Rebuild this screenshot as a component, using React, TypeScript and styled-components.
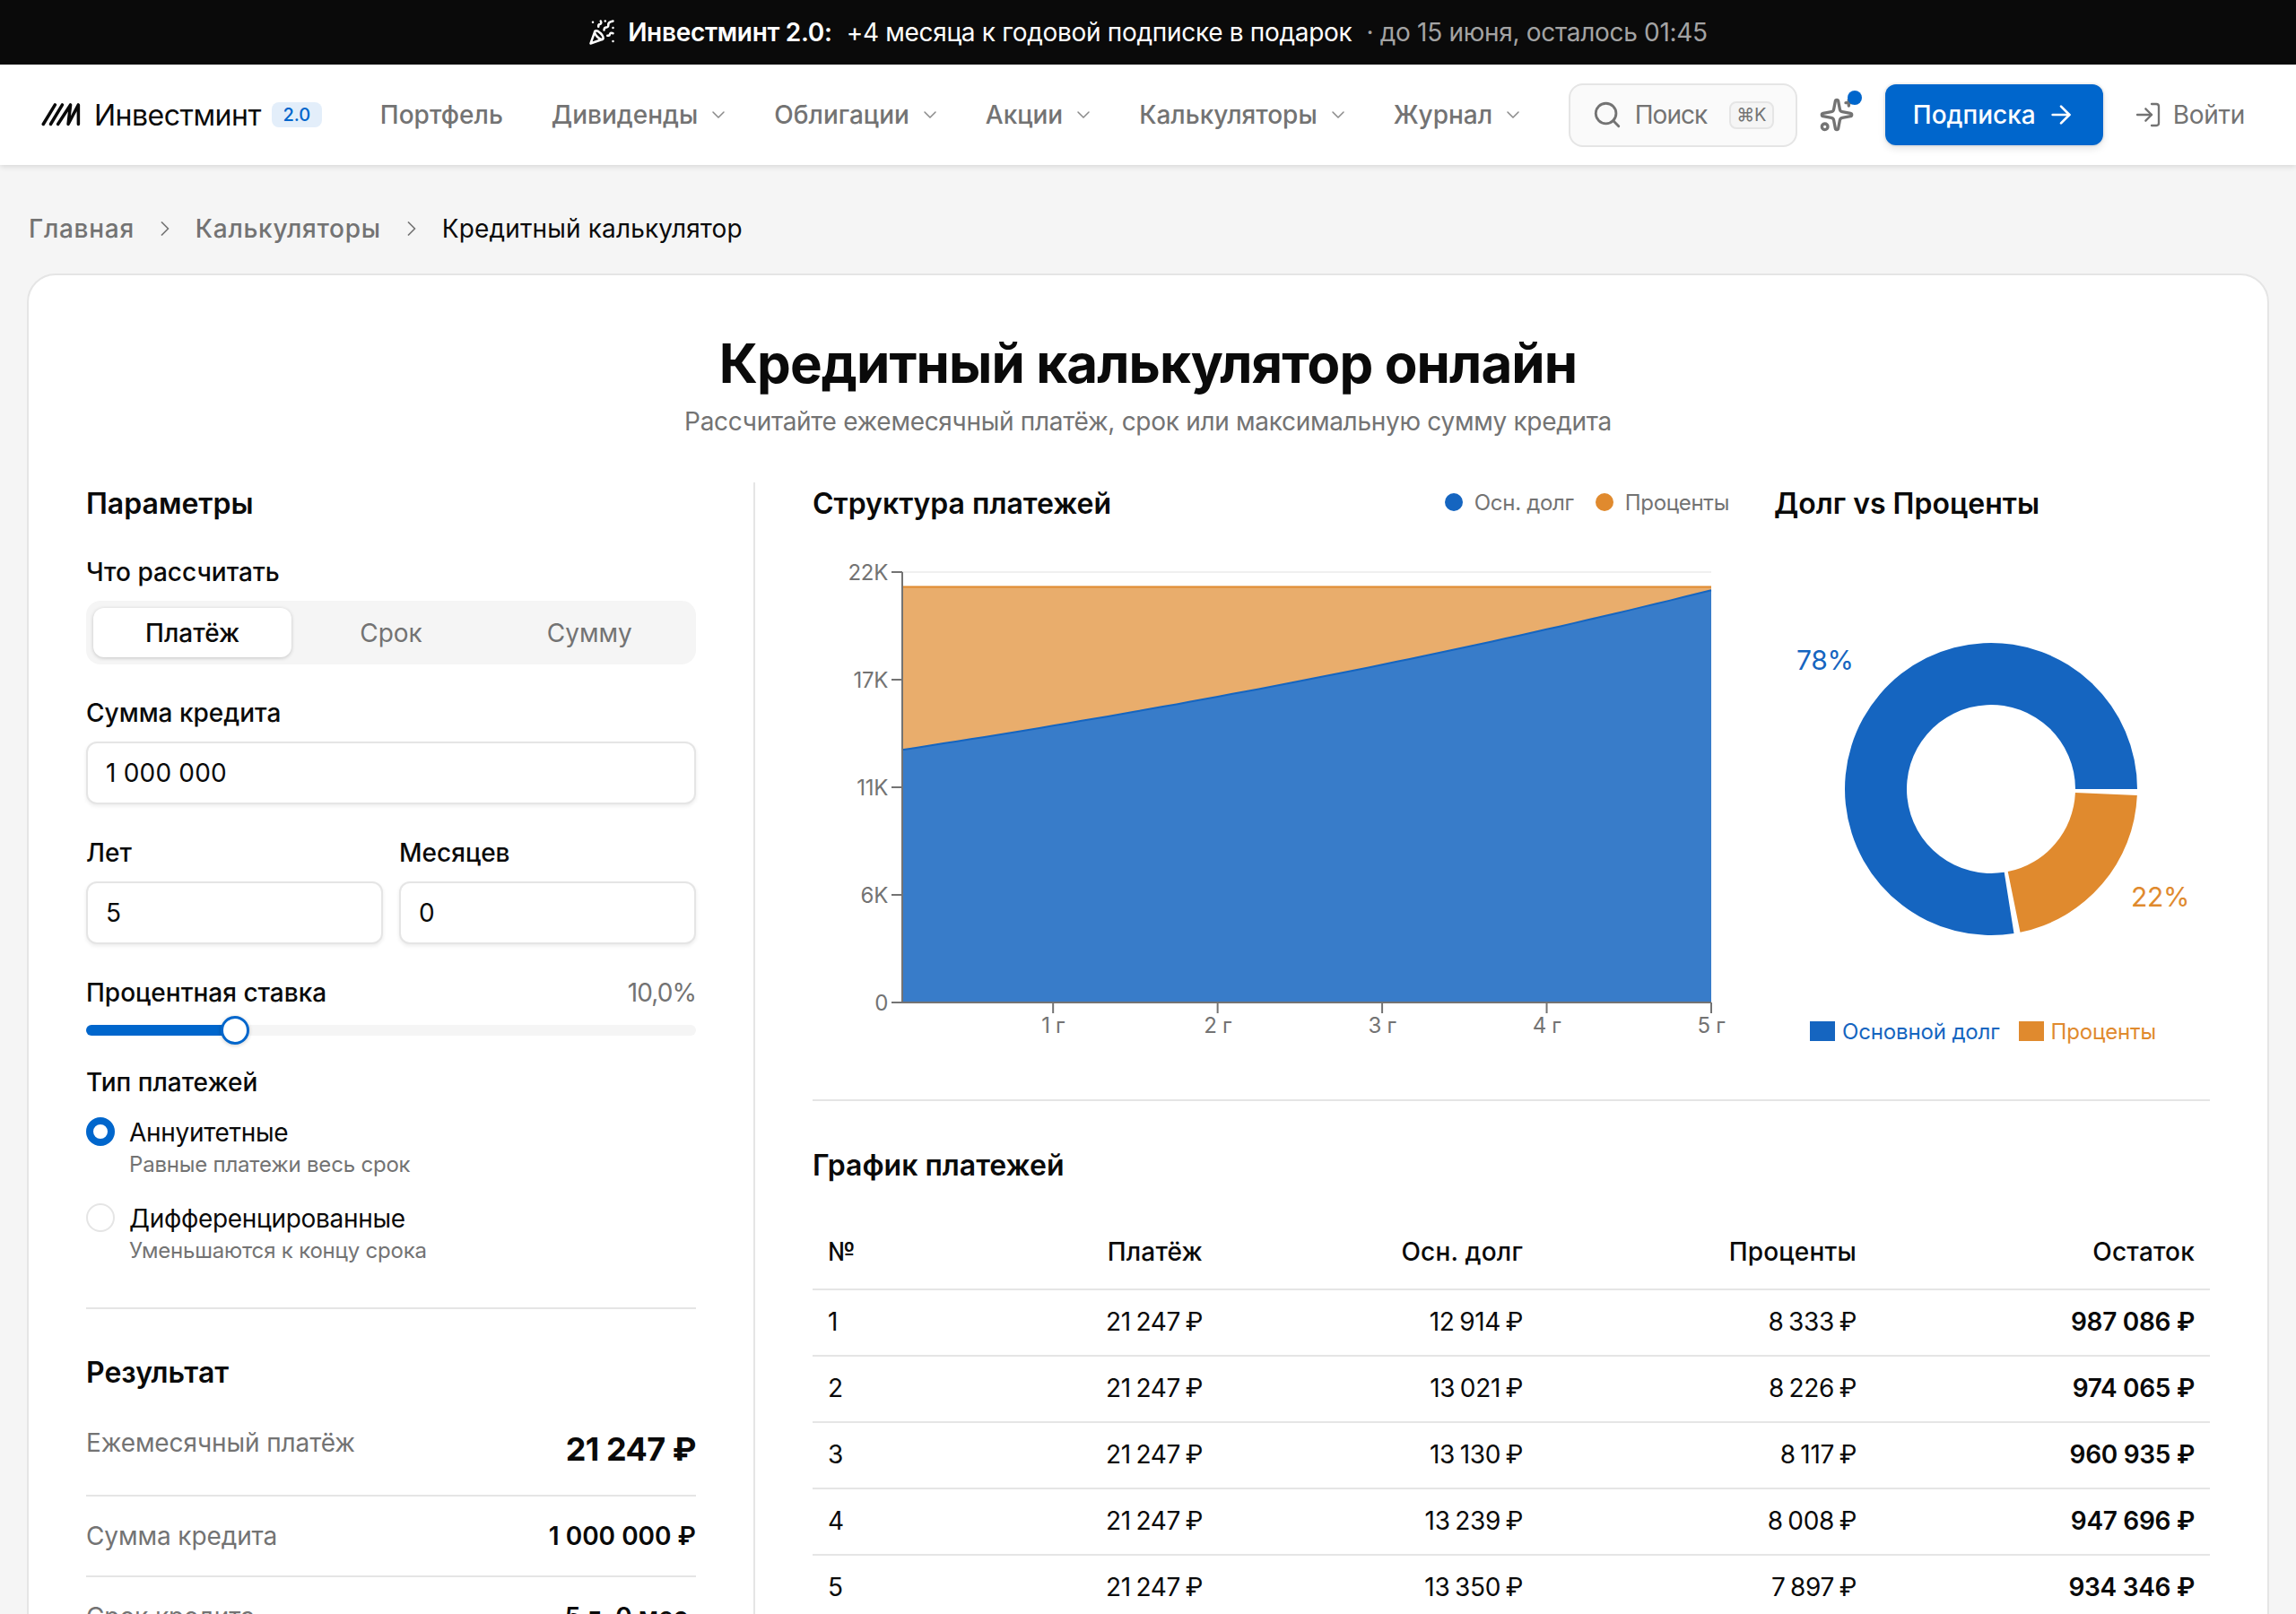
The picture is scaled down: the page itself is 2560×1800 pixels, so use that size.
import styled, { createGlobalStyle } from "styled-components";
import {
  ArrowRight,
  ChevronDown,
  ChevronRight,
  LogIn,
  PartyPopper,
  Search,
  Sparkles,
} from "lucide-react";

const BLUE = "#1565c0";
const ORANGE = "#e08a2e";

const GlobalStyle = createGlobalStyle`
  html, body {
    margin: 0;
    height: 1800px;
    overflow: hidden;
    background: #f5f5f5;
    color: #0a0a0a;
    font-family: Inter, "Liberation Sans", sans-serif;
    letter-spacing: -0.3px;
  }
  * { box-sizing: border-box; }
`;

const navItems = [
  { label: "Портфель", menu: false },
  { label: "Дивиденды", menu: true },
  { label: "Облигации", menu: true },
  { label: "Акции", menu: true },
  { label: "Калькуляторы", menu: true },
  { label: "Журнал", menu: true },
];

const schedule = [
  ["1", "21 247 ₽", "12 914 ₽", "8 333 ₽", "987 086 ₽"],
  ["2", "21 247 ₽", "13 021 ₽", "8 226 ₽", "974 065 ₽"],
  ["3", "21 247 ₽", "13 130 ₽", "8 117 ₽", "960 935 ₽"],
  ["4", "21 247 ₽", "13 239 ₽", "8 008 ₽", "947 696 ₽"],
  ["5", "21 247 ₽", "13 350 ₽", "7 897 ₽", "934 346 ₽"],
];

// chart geometry, in svg units
const PLOT = { left: 100, right: 1002, top: 24, bottom: 504 };
const yOf = (v: number) => PLOT.bottom - (v * 480) / 22000;
const xOf = (month: number) => PLOT.left + ((month - 1) / 59) * (PLOT.right - PLOT.left);

const curve = Array.from({ length: 60 }, (_, i) => {
  const principal = 12914 * Math.pow(1 + 0.1 / 12, i);
  return `${xOf(i + 1).toFixed(1)} ${yOf(principal).toFixed(1)}`;
});
const curveLine = "M" + curve.join(" L");
const blueArea = `${curveLine} L${PLOT.right} ${PLOT.bottom} L${PLOT.left} ${PLOT.bottom} Z`;
const orangeArea = `${curveLine} L${PLOT.right} ${yOf(21247)} L${PLOT.left} ${yOf(21247)} Z`;

const yTicks = [
  { label: "22K", y: 24 },
  { label: "17K", y: 144 },
  { label: "11K", y: 264 },
  { label: "6K", y: 384 },
  { label: "0", y: 504 },
];
const xTicks = ["1 г", "2 г", "3 г", "4 г", "5 г"].map((label, i) => ({
  label,
  x: xOf(i === 4 ? 60 : (i + 1) * 12),
}));

const polar = (r: number, deg: number) => {
  const a = (deg * Math.PI) / 180;
  return `${(242 + r * Math.cos(a)).toFixed(2)} ${(266 + r * Math.sin(a)).toFixed(2)}`;
};
const slice = (from: number, to: number) => {
  const large = to - from > 180 ? 1 : 0;
  return `M${polar(163, from)} A163 163 0 ${large} 1 ${polar(163, to)} L${polar(94, to)} A94 94 0 ${large} 0 ${polar(94, from)} Z`;
};

export default function App() {
  return (
    <>
      <GlobalStyle />
      <Promo>
        <PartyPopper size={30} strokeWidth={2} />
        <PromoStrong>Инвестминт 2.0:</PromoStrong>
        <span>+4 месяца к годовой подписке в подарок</span>
        <PromoMuted>· до 15 июня, осталось 01:45</PromoMuted>
      </Promo>
      <Nav>
        <Logo>
          <svg width="45" height="28" viewBox="0 0 46 28" fill="none" stroke="#0a0a0a" strokeWidth="3.6" strokeLinecap="round" strokeLinejoin="round">
            <path d="M2.3 24.7 L15.7 2.7" />
            <path d="M10.7 24.7 L24 2.7" />
            <path d="M19 24.7 L33.3 2.7 L30.7 24.7 L42.3 2.7 L42.3 24.7" />
          </svg>
          <LogoName>Инвестминт</LogoName>
          <Badge>2.0</Badge>
        </Logo>
        <NavLinks>
          {navItems.map((item) => (
            <NavLink key={item.label} $menu={item.menu}>
              {item.label}
              {item.menu && <ChevronDown size={24} strokeWidth={1.5} color="#8a8a8a" />}
            </NavLink>
          ))}
        </NavLinks>
        <SearchBox>
          <Search size={34} strokeWidth={2} />
          <SearchHint>Поиск</SearchHint>
          <Kbd>⌘K</Kbd>
        </SearchBox>
        <SparkButton>
          <Sparkles size={40} strokeWidth={2} />
          <SparkDot />
        </SparkButton>
        <SubscribeButton>
          Подписка
          <ArrowRight size={32} strokeWidth={2} />
        </SubscribeButton>
        <LoginLink>
          <LogIn size={32} strokeWidth={1.75} />
          Войти
        </LoginLink>
      </Nav>

      <Crumbs>
        <Crumb>Главная</Crumb>
        <ChevronRight size={28} strokeWidth={1.5} color="#737373" />
        <Crumb>Калькуляторы</Crumb>
        <ChevronRight size={28} strokeWidth={1.5} color="#737373" />
        <Crumb $current>Кредитный калькулятор</Crumb>
      </Crumbs>

      <Card>
        <PageTitle>Кредитный калькулятор онлайн</PageTitle>
        <PageSub>Рассчитайте ежемесячный платёж, срок или максимальную сумму кредита</PageSub>
        <Columns>
          <Params>
            <SectionTitle $top={2} $bottom={-2}>Параметры</SectionTitle>
            <Field $top={36}>
              <Label>Что рассчитать</Label>
              <Segment>
                <SegmentItem $active>Платёж</SegmentItem>
                <SegmentItem>Срок</SegmentItem>
                <SegmentItem>Сумму</SegmentItem>
              </Segment>
            </Field>
            <Field>
              <Label>Сумма кредита</Label>
              <InputBox>1 000 000</InputBox>
            </Field>
            <FieldPair>
              <Field $top={0}>
                <Label>Лет</Label>
                <InputBox>5</InputBox>
              </Field>
              <Field $top={0}>
                <Label>Месяцев</Label>
                <InputBox>0</InputBox>
              </Field>
            </FieldPair>
            <Field>
              <LabelRow>
                <Label>Процентная ставка</Label>
                <RateValue>10,0%</RateValue>
              </LabelRow>
              <Slider>
                <SliderFill $width={166} />
                <SliderThumb $left={166} />
              </Slider>
            </Field>
            <Field $top={32}>
              <Label>Тип платежей</Label>
              <RadioOption $top={16}>
                <Radio $checked />
                <div>
                  <RadioTitle>Аннуитетные</RadioTitle>
                  <RadioHint>Равные платежи весь срок</RadioHint>
                </div>
              </RadioOption>
              <RadioOption $top={24}>
                <Radio />
                <div>
                  <RadioTitle>Дифференцированные</RadioTitle>
                  <RadioHint>Уменьшаются к концу срока</RadioHint>
                </div>
              </RadioOption>
            </Field>
            <Rule $top={47} />
            <SectionTitle $top={49}>Результат</SectionTitle>
            <LeadRow>
              <ResultLabel>Ежемесячный платёж</ResultLabel>
              <LeadValue>21 247 ₽</LeadValue>
            </LeadRow>
            <ResultRow>
              <ResultLabel>Сумма кредита</ResultLabel>
              <ResultValue>1 000 000 ₽</ResultValue>
            </ResultRow>
            <ResultRow>
              <ResultLabel>Срок кредита</ResultLabel>
              <ResultValue>5 л. 0 мес.</ResultValue>
            </ResultRow>
          </Params>

          <Output>
            <Charts>
              <div>
                <ChartHeader>
                  <SectionTitle $top={2} $bottom={-2}>Структура платежей</SectionTitle>
                  <ChartLegend>
                    <LegendDot $color={BLUE} />
                    <LegendText>Осн. долг</LegendText>
                    <LegendDot $color={ORANGE} $gap={24} />
                    <LegendText>Проценты</LegendText>
                  </ChartLegend>
                </ChartHeader>
                <ChartSvg width="1024" height="546" viewBox="0 0 1024 546">
                  <line x1={PLOT.left} x2={PLOT.right} y1={24} y2={24} stroke="#f0f0f0" strokeWidth="2" />
                  <path d={orangeArea} fill={ORANGE} fillOpacity="0.7" />
                  <line x1={PLOT.left} x2={PLOT.right} y1={yOf(21247)} y2={yOf(21247)} stroke={ORANGE} strokeWidth="2" />
                  <path d={blueArea} fill={BLUE} fillOpacity="0.85" />
                  <path d={curveLine} fill="none" stroke={BLUE} strokeWidth="2" />
                  <g stroke="#737373" strokeWidth="2">
                    <line x1={PLOT.left} x2={PLOT.left} y1={24} y2={505} />
                    <line x1={PLOT.left - 12} x2={PLOT.right} y1={504} y2={504} />
                    {yTicks.map((t) => (
                      <line key={t.label} x1={PLOT.left - 12} x2={PLOT.left} y1={t.y} y2={t.y} />
                    ))}
                    {xTicks.map((t) => (
                      <line key={t.label} x1={t.x} x2={t.x} y1={504} y2={516} />
                    ))}
                  </g>
                  <g fontSize="24" fill="#737373">
                    {yTicks.map((t) => (
                      <text key={t.label} x={PLOT.left - 16} y={t.y + 9} textAnchor="end">
                        {t.label}
                      </text>
                    ))}
                    {xTicks.map((t) => (
                      <text key={t.label} x={t.x} y={538} textAnchor="middle">
                        {t.label}
                      </text>
                    ))}
                  </g>
                </ChartSvg>
              </div>
              <div>
                <SectionTitle $top={2} $bottom={-2}>Долг vs Проценты</SectionTitle>
                <ChartSvg width="486" height="520" viewBox="0 0 486 520">
                  <path d={slice(81, 360)} fill={BLUE} />
                  <path d={slice(2.5, 78.5)} fill={ORANGE} />
                  <text x="25" y="133" fontSize="30" fill={BLUE}>78%</text>
                  <text x="398" y="397" fontSize="30" fill={ORANGE}>22%</text>
                </ChartSvg>
                <DonutLegend>
                  <LegendSwatch $color={BLUE} />
                  <DonutLabel $color={BLUE}>Основной долг</DonutLabel>
                  <LegendSwatch $color={ORANGE} $gap={21} />
                  <DonutLabel $color={ORANGE}>Проценты</DonutLabel>
                </DonutLegend>
              </div>
            </Charts>
            <Rule $top={60} />
            <SectionTitle $top={50}>График платежей</SectionTitle>
            <Table>
              <TableHead>
                <span>№</span>
                <span>Платёж</span>
                <span>Осн. долг</span>
                <span>Проценты</span>
                <span>Остаток</span>
              </TableHead>
              {schedule.map((row) => (
                <TableRow key={row[0]}>
                  {row.map((cell, i) => (
                    <span key={i}>{cell}</span>
                  ))}
                </TableRow>
              ))}
            </Table>
          </Output>
        </Columns>
      </Card>
    </>
  );
}

const Promo = styled.div`
  height: 72px;
  background: #0a0a0a;
  color: #fff;
  display: flex;
  align-items: center;
  justify-content: center;
  font-size: 28px;
  line-height: 40px;
  svg { margin-right: 14px; }
  span { white-space: pre; }
`;

const PromoStrong = styled.span`
  font-weight: 600;
  margin-right: 16px;
`;

const PromoMuted = styled.span`
  color: #a3a3a3;
  margin-left: 16px;
`;

const Nav = styled.header`
  height: 112px;
  padding: 0 57px 0 46px;
  background: #fff;
  display: flex;
  align-items: center;
  box-shadow: 0 2px 6px rgba(0, 0, 0, 0.12);
  position: relative;
`;

const Logo = styled.div`
  display: flex;
  align-items: center;
`;

const LogoName = styled.span`
  font-size: 32px;
  margin-left: 14px;
  font-weight: 400;
  letter-spacing: -0.5px;
`;

const Badge = styled.span`
  margin-left: 12px;
  width: 56px;
  height: 28px;
  border-radius: 8px;
  background: #e3eefa;
  color: #0066cc;
  font-size: 20px;
  font-weight: 500;
  letter-spacing: 0;
  display: flex;
  align-items: center;
  justify-content: center;
`;

const NavLinks = styled.nav`
  display: flex;
  align-items: center;
  gap: 50px;
  margin-left: 65px;
`;

const NavLink = styled.a<{ $menu: boolean }>`
  display: flex;
  align-items: center;
  gap: 11px;
  padding-right: ${(p) => (p.$menu ? 0 : 4)}px;
  font-size: 28px;
  font-weight: 500;
  letter-spacing: 0;
  color: #737373;
  white-space: nowrap;
`;

const SearchBox = styled.div`
  margin-left: auto;
  width: 255px;
  height: 71px;
  border: 2px solid #e5e5e5;
  border-radius: 16px;
  background: #fafafa;
  color: #737373;
  font-size: 28px;
  display: flex;
  align-items: center;
  padding: 0 24px 0 24px;
  svg { margin-right: 14px; }
`;

const SearchHint = styled.span`
  letter-spacing: -1px;
`;

const Kbd = styled.kbd`
  margin-left: auto;
  width: 50px;
  height: 31px;
  border: 2px solid #e5e5e5;
  border-radius: 8px;
  background: #f5f5f5;
  color: #737373;
  font-family: inherit;
  font-size: 20px;
  display: flex;
  align-items: center;
  justify-content: center;
`;

const SparkButton = styled.div`
  margin-left: 24px;
  width: 40px;
  height: 40px;
  color: #737373;
  position: relative;
`;

const SparkDot = styled.span`
  position: absolute;
  top: -7px;
  right: -8px;
  width: 16px;
  height: 16px;
  border-radius: 50%;
  background: #0066cc;
`;

const SubscribeButton = styled.button`
  margin-left: 34px;
  width: 243px;
  height: 68px;
  border: none;
  border-radius: 12px;
  background: #0066cc;
  color: #fff;
  font: inherit;
  font-size: 28px;
  font-weight: 500;
  display: flex;
  align-items: center;
  justify-content: center;
  gap: 12px;
  box-shadow: 0 0 0 2px rgba(0, 0, 0, 0.04), 0 4px 8px rgba(0, 0, 0, 0.1);
`;

const LoginLink = styled.a`
  margin-left: 34px;
  display: flex;
  align-items: center;
  gap: 12px;
  font-size: 28px;
  color: #737373;
`;

const Crumbs = styled.div`
  height: 121px;
  padding: 21px 32px 0;
  display: flex;
  align-items: center;
  gap: 20px;
  font-size: 28px;
`;

const Crumb = styled.span<{ $current?: boolean }>`
  color: ${(p) => (p.$current ? "#0a0a0a" : "#737373")};
  font-weight: ${(p) => (p.$current ? 400 : 500)};
  letter-spacing: ${(p) => (p.$current ? 0.15 : 0.7)}px;
`;

const Card = styled.main`
  margin: 0 30px;
  padding: 64px 64px 0;
  background: #fff;
  border: 2px solid #e5e5e5;
  border-radius: 32px;
`;

const PageTitle = styled.h1`
  margin: 0;
  text-align: center;
  font-size: 60px;
  line-height: 68px;
  font-weight: 700;
  letter-spacing: -0.9px;
`;

const PageSub = styled.p`
  margin: 11px 0 0;
  text-align: center;
  font-size: 28px;
  line-height: 40px;
  color: #737373;
`;

const Columns = styled.div`
  margin-top: 48px;
  display: grid;
  grid-template-columns: 680px 1fr;
  column-gap: 64px;
`;

const Params = styled.section`
  display: flex;
  flex-direction: column;
`;

const SectionTitle = styled.h2<{ $top?: number; $bottom?: number }>`
  margin: ${(p) => p.$top ?? 0}px 0 ${(p) => p.$bottom ?? 0}px;
  font-size: 32px;
  line-height: 44px;
  font-weight: 600;
  letter-spacing: 0;
`;

const Field = styled.div<{ $top?: number }>`
  margin-top: ${(p) => p.$top ?? 34}px;
  display: flex;
  flex-direction: column;
`;

const FieldPair = styled.div`
  margin-top: 34px;
  display: grid;
  grid-template-columns: 331px 331px;
  column-gap: 18px;
`;

const Label = styled.label`
  font-size: 28px;
  line-height: 40px;
  font-weight: 500;
  letter-spacing: 0;
`;

const LabelRow = styled.div`
  display: flex;
  justify-content: space-between;
`;

const RateValue = styled.span`
  font-size: 28px;
  line-height: 40px;
  letter-spacing: -0.9px;
  color: #737373;
`;

const Segment = styled.div`
  margin-top: 12px;
  height: 71px;
  padding: 8px;
  border-radius: 16px;
  background: #f5f5f5;
  display: grid;
  grid-template-columns: repeat(3, 1fr);
`;

const SegmentItem = styled.div<{ $active?: boolean }>`
  border-radius: 12px;
  font-size: 28px;
  letter-spacing: 0;
  display: flex;
  align-items: center;
  justify-content: center;
  color: ${(p) => (p.$active ? "#0a0a0a" : "#737373")};
  font-weight: ${(p) => (p.$active ? 500 : 400)};
  background: ${(p) => (p.$active ? "#fff" : "transparent")};
  box-shadow: ${(p) => (p.$active ? "0 1px 4px rgba(0, 0, 0, 0.2)" : "none")};
`;

const InputBox = styled.div`
  margin-top: 12px;
  height: 70px;
  padding: 0 20px;
  border: 2px solid #e5e5e5;
  border-radius: 12px;
  background: #fff;
  font-size: 28px;
  letter-spacing: 0.2px;
  display: flex;
  align-items: center;
  box-shadow: 0 2px 4px rgba(0, 0, 0, 0.08);
`;

const Slider = styled.div`
  margin-top: 16px;
  height: 12px;
  border-radius: 6px;
  background: #f5f5f5;
  position: relative;
`;

const SliderFill = styled.div<{ $width: number }>`
  width: ${(p) => p.$width}px;
  height: 100%;
  border-radius: 6px;
  background: #0066cc;
`;

const SliderThumb = styled.span<{ $left: number }>`
  position: absolute;
  top: -10px;
  left: ${(p) => p.$left - 16}px;
  width: 32px;
  height: 32px;
  border-radius: 50%;
  border: 3px solid #0066cc;
  background: #fff;
  box-shadow: 0 1px 4px rgba(0, 0, 0, 0.2);
`;

const RadioOption = styled.div<{ $top: number }>`
  margin-top: ${(p) => p.$top}px;
  display: flex;
  gap: 16px;
`;

const Radio = styled.span<{ $checked?: boolean }>`
  flex: none;
  width: 32px;
  height: 32px;
  margin-top: 3px;
  border-radius: 50%;
  border: ${(p) => (p.$checked ? "8px solid #0066cc" : "2px solid #e5e5e5")};
  background: #fff;
`;

const RadioTitle = styled.div`
  font-size: 28px;
  line-height: 40px;
`;

const RadioHint = styled.div`
  font-size: 24px;
  line-height: 32px;
  letter-spacing: -0.2px;
  color: #737373;
`;

const Rule = styled.hr<{ $top: number }>`
  margin: ${(p) => p.$top}px 0 0;
  width: 100%;
  border: none;
  border-top: 2px solid #e5e5e5;
`;

const ResultRow = styled.div`
  padding: 24px 0;
  border-bottom: 2px solid #e5e5e5;
  display: flex;
  justify-content: space-between;
  align-items: center;
  line-height: 40px;
`;

const LeadRow = styled(ResultRow)`
  padding: 36px 0 27px;
  align-items: flex-start;
`;

const ResultLabel = styled.span`
  font-size: 28px;
  letter-spacing: -0.1px;
  color: #737373;
`;

const ResultValue = styled.span`
  font-size: 28px;
  font-weight: 600;
  letter-spacing: 0;
`;

const LeadValue = styled.span`
  font-size: 36px;
  line-height: 48px;
  margin-top: 3px;
  font-weight: 700;
  letter-spacing: -0.5px;
`;

const Output = styled.section`
  border-left: 2px solid #e5e5e5;
  padding-left: 64px;
  min-width: 0;
`;

const Charts = styled.div`
  display: grid;
  grid-template-columns: 1024px 486px;
  column-gap: 48px;
`;

const ChartHeader = styled.div`
  display: flex;
  align-items: center;
  justify-content: space-between;
  padding-right: 2px;
`;

const ChartLegend = styled.div`
  display: flex;
  align-items: center;
`;

const LegendDot = styled.span<{ $color: string; $gap?: number }>`
  width: 20px;
  height: 20px;
  margin-left: ${(p) => p.$gap ?? 0}px;
  margin-right: 13px;
  border-radius: 50%;
  background: ${(p) => p.$color};
`;

const LegendText = styled.span`
  font-size: 24px;
  color: #737373;
`;

const ChartSvg = styled.svg`
  display: block;
  margin-top: 32px;
  font-family: Inter, "Liberation Sans", sans-serif;
`;

const DonutLegend = styled.div`
  height: 32px;
  padding-left: 40px;
  display: flex;
  align-items: center;
`;

const LegendSwatch = styled.span<{ $color: string; $gap?: number }>`
  width: 28px;
  height: 22px;
  margin-left: ${(p) => p.$gap ?? 0}px;
  margin-right: 8px;
  background: ${(p) => p.$color};
`;

const DonutLabel = styled.span<{ $color: string }>`
  font-size: 24px;
  letter-spacing: -0.15px;
  color: ${(p) => p.$color};
`;

const Table = styled.div`
  margin-top: 35px;
  font-size: 28px;
  line-height: 40px;
`;

const TableRow = styled.div`
  display: grid;
  grid-template-columns: 200px 252px 357px 372px 377px;
  align-items: center;
  height: 74px;
  padding-bottom: 2px;
  border-bottom: 2px solid #e5e5e5;
  word-spacing: -2px;
  span { text-align: right; padding-right: 17px; }
  span:first-child { text-align: left; padding-left: 17px; }
  span:last-child { font-weight: 600; word-spacing: 0; }
`;

const TableHead = styled(TableRow)`
  height: 82px;
  font-weight: 500;
  letter-spacing: 0.2px;
  word-spacing: 0;
  span:last-child { font-weight: 500; }
`;
